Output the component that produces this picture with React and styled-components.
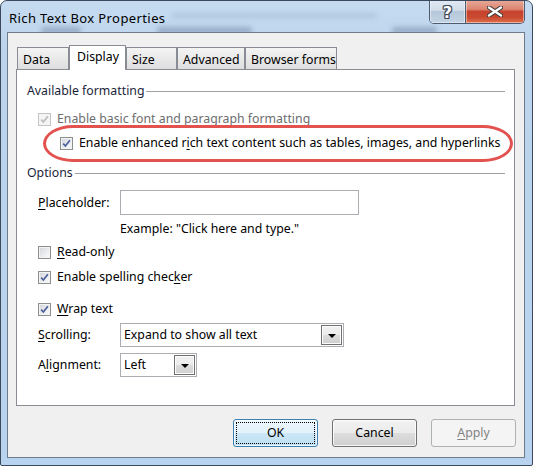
import React from 'react';
import styled, { createGlobalStyle, css } from 'styled-components';

const GlobalStyle = createGlobalStyle`
  html, body {
    margin: 0;
    padding: 0;
    background: #fff;
  }
  body {
    font-family: "Noto Sans", "Open Sans", sans-serif;
    font-size: 12.3px;
    line-height: 16px;
    color: #000;
  }
`;

const Window = styled.div`
  position: relative;
  width: 533px;
  height: 466px;
  box-sizing: border-box;
  border: 1px solid #3a4a5c;
  border-radius: 7px 7px 2px 2px;
  background: linear-gradient(180deg, #c6dbf0 0%, #bcd4ec 10%, #b8d3ef 100%);
  padding: 0 7px 7px 6px;
  display: flex;
  flex-direction: column;
  overflow: hidden;
`;

const TitleBar = styled.div`
  position: relative;
  height: 31px;
  display: flex;
  align-items: flex-start;
  overflow: hidden;
`;

/* blurred shapes of the window behind the glass */
const Smudge = styled.div`
  position: absolute;
  top: ${p => p.$top}px;
  left: ${p => p.$left}px;
  width: ${p => p.$w}px;
  height: ${p => p.$h}px;
  border-radius: 3px;
  background: rgba(45, 70, 105, ${p => p.$a});
  filter: blur(2.5px);
`;

const Title = styled.div`
  position: relative;
  padding: 9px 0 0 2px;
  font-size: 13px;
  letter-spacing: 0.4px;
  color: #000;
`;

const Caption = styled.div`
  position: relative;
  margin-left: auto;
  margin-top: -1px;
  display: flex;
  height: 24px;
  border: 1px solid #4b5c72;
  border-top: none;
  border-radius: 0 0 5px 5px;
  overflow: hidden;
  box-sizing: border-box;
`;

const CaptionButton = styled.div`
  display: flex;
  align-items: center;
  justify-content: center;
  width: ${p => p.$w}px;
  height: 100%;
  box-shadow: inset 0 0 0 1px rgba(255, 255, 255, 0.45);
  ${p => p.$close
    ? css`
        background: linear-gradient(180deg, #e9a99b 0%, #dc8670 40%, #c7432e 50%, #c84a30 75%, #e0704c 100%);
      `
    : css`
        background: linear-gradient(180deg, #e2eaf3 0%, #d2dde9 45%, #b6c7d9 50%, #c3d4e6 100%);
        border-right: 1px solid #4b5c72;
      `}
`;

const HelpMark = styled.span`
  font-family: "DejaVu Sans", sans-serif;
  font-weight: bold;
  font-size: 16px;
  line-height: 17px;
  color: #fff;
  text-shadow: 1px 0 #3d4856, -1px 0 #3d4856, 0 1px #3d4856, 0 -1px #3d4856,
    1px 1px #3d4856, -1px -1px #3d4856, 1px -1px #3d4856, -1px 1px #3d4856;
  margin-top: 1px;
`;

const Client = styled.div`
  flex: 1;
  display: flex;
  flex-direction: column;
  border: 1px solid #6d7b8b;
  background: #f0f0f0;
  padding-top: 12px;
`;

const TabArea = styled.div`
  flex: 1;
  display: flex;
  flex-direction: column;
  margin: 0 9px 0 8px;
`;

const TabStrip = styled.div`
  display: flex;
  align-items: flex-end;
  height: 24px;
  padding-left: 1px;
`;

const Tab = styled.div`
  box-sizing: border-box;
  width: ${p => p.$w}px;
  border: 1px solid #898c95;
  border-bottom: none;
  white-space: nowrap;
  ${p => p.$active
    ? css`
        position: relative;
        z-index: 1;
        height: 25px;
        margin-bottom: -1px;
        padding: 3px 0 0 7px;
        background: #fff;
      `
    : css`
        height: 22px;
        padding: 4px 0 0 5px;
        background: linear-gradient(180deg, #f4f4f4 0%, #e9e9e9 50%, #dedede 100%);
      `}
`;

const Panel = styled.div`
  position: relative;
  flex: 1;
  background: #fff;
  border: 1px solid #898c95;
  padding: 13px 9px 0 10px;
  display: flex;
  flex-direction: column;
`;

const GroupHeader = styled.div`
  display: flex;
  align-items: center;
  margin-top: ${p => p.$mt || 0}px;
  color: #1b1f3a;

  &::after {
    content: "";
    flex: 1;
    height: 1px;
    margin-left: 2px;
    background: #a0a0a0;
  }
`;

const Group = styled.div`
  display: flex;
  flex-direction: column;
  padding-left: 11px;
`;

const CheckRow = styled.div`
  display: flex;
  align-items: center;
  gap: 6px;
  height: 16px;
  margin-top: ${p => p.$mt || 0}px;
  padding-left: ${p => p.$indent || 0}px;
  color: ${p => (p.$disabled ? '#6d6d6d' : '#000')};
  white-space: nowrap;
`;

const Box = styled.span`
  flex-shrink: 0;
  box-sizing: border-box;
  width: 13px;
  height: 13px;
  display: flex;
  align-items: center;
  justify-content: center;
  border: 1px solid ${p => (p.$disabled ? '#c4c4c4' : '#8e8f8f')};
  background: ${p =>
    p.$disabled
      ? '#f4f4f4'
      : 'linear-gradient(135deg, #d2d5da 0%, #eceef0 60%, #fafafa 100%)'};
  box-shadow: inset 0 0 0 1px ${p => (p.$disabled ? '#f4f4f4' : '#f3f3f3')};
`;

const Key = styled.span`
  text-decoration: underline;
  text-underline-offset: 2px;
`;

const FieldRow = styled.div`
  display: grid;
  grid-template-columns: 82px auto;
  align-items: center;
  justify-items: start;
  margin-top: ${p => p.$mt || 0}px;
`;

const TextBox = styled.div`
  box-sizing: border-box;
  width: 239px;
  height: 25px;
  border: 1px solid #abadb3;
  background: #fff;
`;

const Hint = styled.div`
  margin-top: 6px;
  padding-left: 82px;
`;

const Select = styled.div`
  box-sizing: border-box;
  width: ${p => p.$w}px;
  height: 24px;
  display: flex;
  align-items: center;
  border: 1px solid #abadb3;
  background: #fff;
  padding: 0 1px 0 3px;
`;

const SelectText = styled.span`
  flex: 1;
  white-space: nowrap;
`;

const DropButton = styled.span`
  box-sizing: border-box;
  width: 21px;
  height: 20px;
  display: flex;
  align-items: center;
  justify-content: center;
  border: 1px solid #707070;
  background: linear-gradient(180deg, #f2f2f2 0%, #ebebeb 49%, #dddddd 50%, #cfcfcf 100%);
  box-shadow: inset 0 0 0 1px #fcfcfc;

  &::after {
    content: "";
    border-left: 4px solid transparent;
    border-right: 4px solid transparent;
    border-top: 4px solid #000;
    margin-top: 1px;
  }
`;

const Oval = styled.div`
  position: absolute;
  left: 26px;
  top: 55px;
  width: 470px;
  height: 37px;
  box-sizing: border-box;
  border: 3px solid #e2524f;
  border-radius: 30px / 18.5px;
  pointer-events: none;
`;

const Footer = styled.div`
  height: 51px;
  box-sizing: border-box;
  display: flex;
  justify-content: flex-end;
  gap: 14px;
  padding: 13px 8px 0 0;
`;

const Button = styled.button`
  position: relative;
  box-sizing: border-box;
  width: 85px;
  height: 28px;
  padding: 0;
  font: inherit;
  color: #000;
  border-radius: 3px;
  border: 1px solid #707070;
  background: linear-gradient(180deg, #f2f2f2 0%, #ebebeb 49%, #dddddd 50%, #cfcfcf 100%);
  box-shadow: inset 0 0 0 1px rgba(255, 255, 255, 0.8);

  ${p => p.$default && css`
    border-color: #3c7fb1;
    background: linear-gradient(180deg, #eef7fd 0%, #e2f1fb 49%, #cde7f6 50%, #bcdff3 100%);
    box-shadow: inset 0 0 0 1px rgba(255, 255, 255, 0.7);

    &::after {
      content: "";
      position: absolute;
      inset: 2px;
      border: 1px dotted #000;
    }
  `}

  ${p => p.disabled && css`
    color: #838383;
    border-color: #adb2b5;
    background: #f4f4f4;
    box-shadow: none;
  `}
`;

const Check = ({ disabled }) => (
  <Box $disabled={disabled}>
    <svg width="9" height="9" viewBox="0 0 9 9">
      <path
        d="M1.2 4.6 L3.4 7 L7.9 1.3"
        fill="none"
        stroke={disabled ? '#bdbdbd' : '#4a5f9c'}
        strokeWidth="1.7"
      />
    </svg>
  </Box>
);

const EmptyBox = () => <Box />;

const CloseGlyph = () => (
  <svg width="16" height="11" viewBox="0 0 16 11">
    <path d="M2 1.5 L14 9.5 M14 1.5 L2 9.5" stroke="#3b3b3b" strokeWidth="4.4" strokeLinecap="round" />
    <path d="M2 1.5 L14 9.5 M14 1.5 L2 9.5" stroke="#fff" strokeWidth="2.4" strokeLinecap="round" />
  </svg>
);

export default function App() {
  return (
    <>
      <GlobalStyle />
      <Window>
        <TitleBar>
          <Smudge $top={26} $left={34} $w={40} $h={7} $a={0.28} />
          <Smudge $top={26} $left={150} $w={95} $h={7} $a={0.28} />
          <Smudge $top={26} $left={385} $w={45} $h={7} $a={0.28} />
          <Smudge $top={12} $left={165} $w={205} $h={5} $a={0.12} />
          <Title>Rich Text Box Properties</Title>
          <Caption>
            <CaptionButton $w={35}>
              <HelpMark>?</HelpMark>
            </CaptionButton>
            <CaptionButton $w={58} $close>
              <CloseGlyph />
            </CaptionButton>
          </Caption>
        </TitleBar>

        <Client>
          <TabArea>
            <TabStrip>
              <Tab $w={52}>Data</Tab>
              <Tab $w={57} $active>Display</Tab>
              <Tab $w={51}>Size</Tab>
              <Tab $w={68}>Advanced</Tab>
              <Tab $w={92}>Browser forms</Tab>
            </TabStrip>

            <Panel>
              <GroupHeader>Available formatting</GroupHeader>
              <Group>
                <CheckRow $mt={12} $disabled>
                  <Check disabled />
                  Enable basic font and paragraph formatting
                </CheckRow>
                <CheckRow $mt={8} $indent={22}>
                  <Check />
                  <span>
                    Enable enhanced r<Key>i</Key>ch text content such as tables, images, and hyperlinks
                  </span>
                </CheckRow>
              </Group>

              <GroupHeader $mt={14}>Options</GroupHeader>
              <Group>
                <FieldRow $mt={9}>
                  <span><Key>P</Key>laceholder:</span>
                  <TextBox />
                </FieldRow>
                <Hint>Example: "Click here and type."</Hint>
                <CheckRow $mt={7}>
                  <EmptyBox />
                  <span><Key>R</Key>ead-only</span>
                </CheckRow>
                <CheckRow $mt={9}>
                  <Check />
                  <span>Enable spelling chec<Key>k</Key>er</span>
                </CheckRow>
                <CheckRow $mt={16}>
                  <Check />
                  <span><Key>W</Key>rap text</span>
                </CheckRow>
                <FieldRow $mt={6}>
                  <span><Key>S</Key>crolling:</span>
                  <Select $w={224}>
                    <SelectText>Expand to show all text</SelectText>
                    <DropButton />
                  </Select>
                </FieldRow>
                <FieldRow $mt={6}>
                  <span>A<Key>l</Key>ignment:</span>
                  <Select $w={77}>
                    <SelectText>Left</SelectText>
                    <DropButton />
                  </Select>
                </FieldRow>
              </Group>

              <Oval />
            </Panel>
          </TabArea>

          <Footer>
            <Button $default>OK</Button>
            <Button>Cancel</Button>
            <Button disabled><Key>A</Key>pply</Button>
          </Footer>
        </Client>
      </Window>
    </>
  );
}
